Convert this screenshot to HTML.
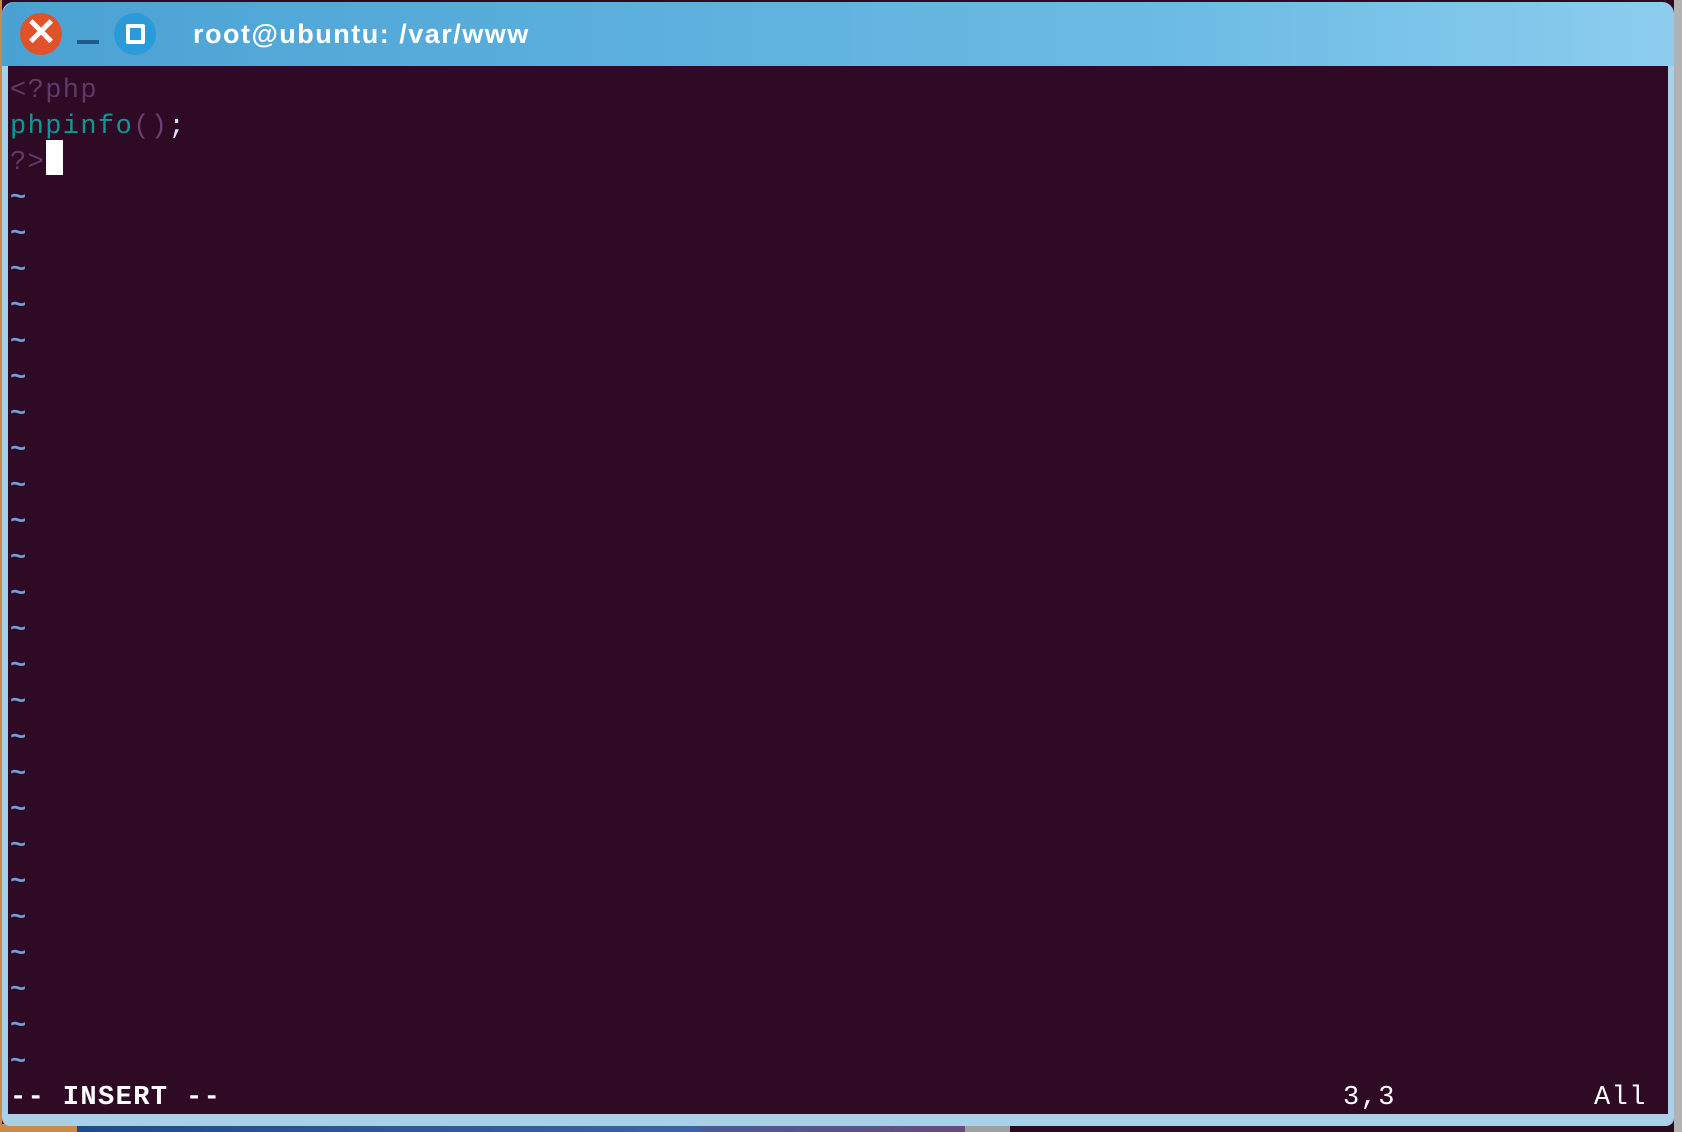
<!DOCTYPE html>
<html><head><meta charset="utf-8"><style>
*{margin:0;padding:0;box-sizing:border-box}
body{width:1682px;height:1132px;overflow:hidden;background:#2f0a24;position:relative;font-family:"Liberation Mono",monospace}
.desk{position:absolute;top:1124px;height:8px}
#frame{position:absolute;left:2px;top:2px;width:1672px;height:1124px;background:#a9d0e6;border-radius:12px 12px 8px 8px}
#title{position:absolute;left:2px;top:2px;width:1672px;height:64px;background:linear-gradient(90deg,#4aa2d3,#6cbbe5 70%,#8ccdee);border-radius:14px 14px 0 0}
#term{position:absolute;left:8px;top:66px;width:1660px;height:1048px;background:#2f0a24}
.row{position:absolute;left:10px;height:36px;line-height:36px;font-size:27px;letter-spacing:1.4px;white-space:pre}
.t{color:#6d9fd8;font-weight:bold}
</style></head><body>
<div class="desk" style="left:0;width:77px;background:#c98b4a"></div>
<div class="desk" style="left:77px;width:623px;background:linear-gradient(90deg,#1e4a8e,#3a64a8)"></div>
<div class="desk" style="left:700px;width:265px;background:linear-gradient(90deg,#4a5a9a,#6a4a82)"></div>
<div class="desk" style="left:965px;width:45px;background:#a0a0a0"></div>
<div class="desk" style="left:1010px;width:672px;background:#2a0a20"></div>
<div style="position:absolute;left:1674px;top:0;width:8px;height:1132px;background:#b2b2b2"></div>
<div style="position:absolute;left:0;top:0;width:2px;height:1132px;background:#c98b4a"></div>
<div id="frame"></div>
<div id="title"></div>
<div style="position:absolute;left:20px;top:13px;width:42px;height:42px;border-radius:50%;background:#e0522a"></div>
<div style="position:absolute;left:20px;top:9px;width:42px;height:42px;color:#fff;font:bold 38px 'Liberation Sans',sans-serif;text-align:center;line-height:48px">✕</div>
<div style="position:absolute;left:77px;top:40px;width:22px;height:4px;background:#1f5a8a"></div>
<div style="position:absolute;left:114px;top:13px;width:42px;height:42px;border-radius:50%;background:#2a9ad8"></div>
<div style="position:absolute;left:126px;top:24px;width:19px;height:20px;border:4px solid #fff;border-radius:2px"></div>
<div style="position:absolute;left:193px;top:14px;color:#fff;font:bold 27px 'Liberation Sans',sans-serif;letter-spacing:1.5px;line-height:40px">root@ubuntu: /var/www</div>
<div id="term"></div>
<div class="row" style="top:73px;color:#5e3a68">&lt;?php</div>
<div class="row" style="top:109px"><span style="color:#0a9a96">phpinfo</span><span style="color:#6a3f72">()</span><span style="color:#e0e0ff">;</span></div>
<div class="row" style="top:145px;color:#5e3a68">?&gt;</div>
<div style="position:absolute;left:46px;top:140px;width:17px;height:35px;background:#fff"></div>
<div id="tl"></div>
<div class="row" style="top:1080px;color:#fff;font-weight:bold">-- INSERT --</div>
<div class="row" style="top:1080px;left:1343px;color:#fff">3,3</div>
<div class="row" style="top:1080px;left:1594px;color:#fff">All</div>
<script>
var h='';for(var i=0;i<25;i++){h+='<div class="row t" style="top:'+(181+i*36)+'px">~</div>';}
document.getElementById('tl').innerHTML=h;
</script>
</body></html>
